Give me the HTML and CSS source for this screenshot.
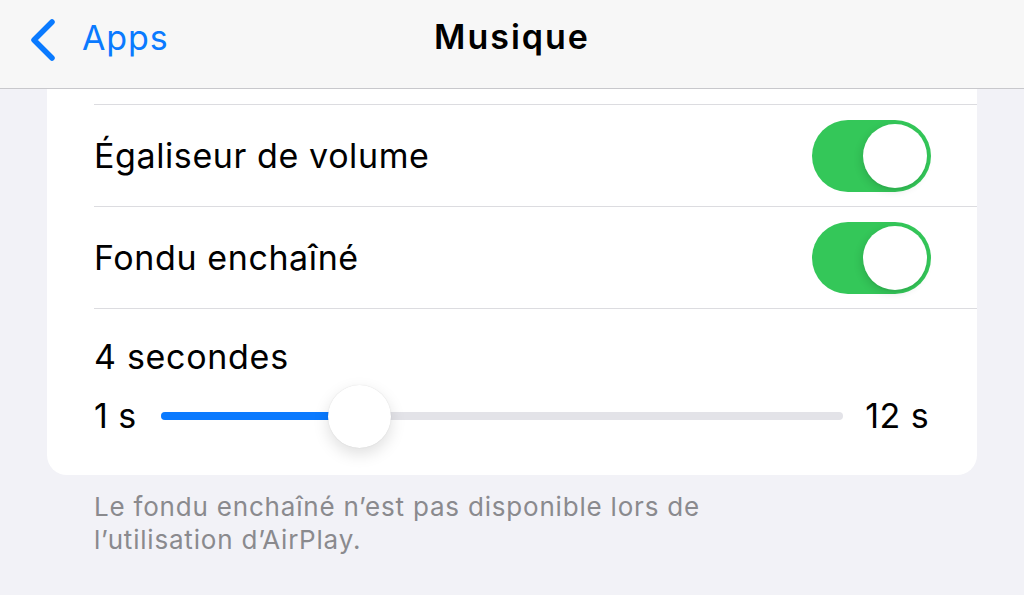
FILE: index.html
```html
<!DOCTYPE html>
<html lang="fr">
  <head>
    <meta charset="UTF-8" />
    <meta name="viewport" content="width=device-width, initial-scale=1.0" />
    <title>Musique</title>
    <link rel="stylesheet" href="styles.css">
  </head>
  <body>
    <!-- barre de navigation -->
    <header class="nav-bar">
      <a class="back" href="#">
        <svg class="chevron" width="26" height="42" viewBox="0 0 26 42">
          <path d="M22 3 L4 21 L22 39" fill="none" stroke="currentColor" stroke-width="5.5" stroke-linecap="round" stroke-linejoin="round" />
        </svg>
        <span>Apps</span>
      </a>
      <h1 class="nav-title">Musique</h1>
      <div></div>
    </header>

    <main class="content">
      <section class="group">
        <!-- ligne précédente, en partie masquée par la barre -->
        <div class="cell cell-stub"></div>
        <div class="cell">
          <span class="cell-label">Égaliseur de volume</span>
          <label class="switch">
            <input type="checkbox" checked>
            <span class="switch-knob"></span>
          </label>
        </div>
        <div class="cell">
          <span class="cell-label">Fondu enchaîné</span>
          <label class="switch">
            <input type="checkbox" checked>
            <span class="switch-knob"></span>
          </label>
        </div>
        <div class="slider-cell">
          <div class="slider-value">4 secondes</div>
          <div class="slider-row">
            <span class="slider-end">1 s</span>
            <div class="slider-track">
              <div class="slider-fill" style="width: 29%"></div>
              <div class="slider-thumb" style="left: 29%"></div>
            </div>
            <span class="slider-end">12 s</span>
          </div>
        </div>
      </section>
      <p class="group-footer">Le fondu enchaîné n’est pas disponible lors de<br>l’utilisation d’AirPlay.</p>
    </main>
  </body>
</html>
```

FILE: styles.css
```css
* {
  box-sizing: border-box;
}
body {
  margin: 0;
  height: 595px;
  overflow: hidden;
  background-color: #f2f2f7;
  font-family: Inter, "Noto Sans", sans-serif;
  color: #000;
  -webkit-font-smoothing: antialiased;
}
.nav-bar {
  display: grid;
  grid-template-columns: 1fr auto 1fr;
  align-items: flex-start;
  height: 89px;
  padding: 15px 0 0 30px;
  background-color: #f7f7f7;
  border-bottom: 1px solid #c8c8cc;
}
.back {
  display: flex;
  align-items: center;
  gap: 26px;
  height: 44px;
  color: #0a7aff;
  text-decoration: none;
  font-size: 34px;
  letter-spacing: 0.9px;
}
.chevron {
  flex-shrink: 0;
  margin-top: 6px;
}
.nav-title {
  margin: 0 0 0 -30px;
  line-height: 44px;
  font-size: 34px;
  font-weight: 600;
  letter-spacing: 2px;
}
.content {
  padding: 0 47px;
}
.group {
  background-color: #fff;
  border-radius: 0 0 20px 20px;
}
.cell {
  display: flex;
  align-items: center;
  justify-content: space-between;
  height: 102px;
  margin-left: 47px;
  padding-right: 46px;
  border-bottom: 1px solid #dcdce0;
}
.cell-stub {
  height: 16px;
}
.cell-label {
  font-size: 34px;
  letter-spacing: 0.6px;
}
.switch {
  position: relative;
  display: block;
  width: 119px;
  height: 72px;
}
.switch input {
  display: none;
}
.switch-knob {
  position: absolute;
  inset: 0;
  border-radius: 36px;
  background-color: #e9e9ea;
}
.switch-knob::after {
  content: "";
  position: absolute;
  top: 4px;
  left: 4px;
  width: 64px;
  height: 64px;
  border-radius: 50%;
  background-color: #fff;
  box-shadow: -2px 3px 8px rgba(0, 0, 0, 0.12), 0 2px 1px rgba(0, 0, 0, 0.04);
}
.switch input:checked + .switch-knob {
  background-color: #34c759;
}
.switch input:checked + .switch-knob::after {
  left: 51px;
}
.slider-cell {
  padding: 28px 48px 28px 47px;
}
.slider-value {
  line-height: 40px;
  font-size: 34px;
  letter-spacing: 0.7px;
}
.slider-row {
  display: flex;
  align-items: center;
  height: 63px;
  margin-top: 7px;
}
.slider-end {
  font-size: 34px;
  letter-spacing: 0.4px;
}
.slider-track {
  position: relative;
  flex: 1;
  height: 8px;
  margin: 0 22px 0 24px;
  border-radius: 4px;
  background-color: #e3e3e8;
}
.slider-fill {
  height: 100%;
  border-radius: 4px;
  background-color: #0a7aff;
}
.slider-thumb {
  position: absolute;
  top: 50%;
  width: 63px;
  height: 63px;
  margin: -31px 0 0 -31px;
  border-radius: 50%;
  background-color: #fff;
  box-shadow: 0 6px 16px rgba(0, 0, 0, 0.13), 0 0 1px rgba(0, 0, 0, 0.15);
}
.group-footer {
  margin: 15px 0 0;
  padding-left: 47px;
  line-height: 33px;
  font-size: 26px;
  letter-spacing: 0.8px;
  color: #8a8a8e;
}
```
